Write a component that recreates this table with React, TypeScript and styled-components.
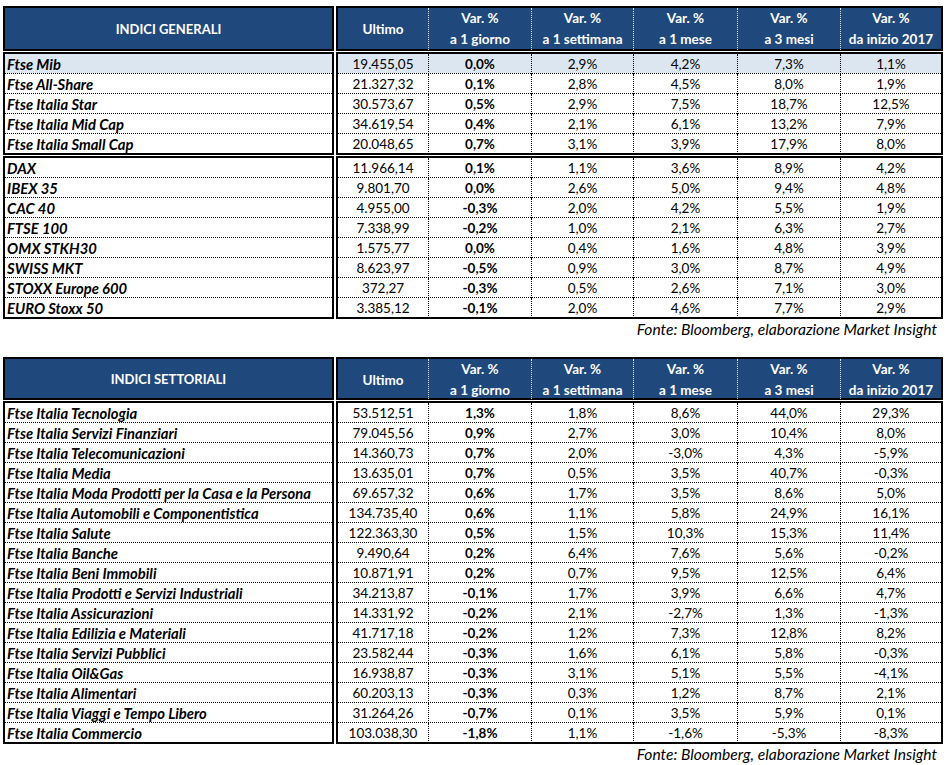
import React from 'react'
import styled, { createGlobalStyle } from 'styled-components'

const GlobalStyle = createGlobalStyle`
  * { box-sizing: border-box; }
  body {
    margin: 0;
    background: #fff;
    font-family: Lato, "Liberation Sans", sans-serif;
    color: #000;
  }
`;

// grid of the data columns
const COLS = '90px 103px 102px 104px 103px 1fr';
const BLUE = '#1F497D';

const Page = styled.div`
  padding: 6px 0 0 3px;
  width: 947px;
`;

const TableBlock = styled.div`
  display: flex;
  flex-direction: column;
  gap: 1px;
  width: 940px;
`;

const Section = styled.div`
  display: grid;
  grid-template-columns: 331px 607px;
  column-gap: 2px;
`;

const Box = styled.div`
  border: 2px solid #000;
`;

// header
const HeaderLabel = styled.div<{ $h: number }>`
  height: ${({ $h }) => $h}px;
  background: ${BLUE};
  color: #fff;
  font-weight: bold;
  font-size: 13px;
  display: flex;
  align-items: center;
  justify-content: center;
`;
const HeaderGrid = styled.div<{ $h: number }>`
  height: ${({ $h }) => $h}px;
  background: ${BLUE};
  display: grid;
  grid-template-columns: ${COLS};
`;
const HeaderCell = styled.div`
  color: #fff;
  font-weight: bold;
  font-size: 13.5px;
  line-height: 21px;
  display: flex;
  flex-direction: column;
  align-items: center;
  justify-content: center;
  & + & {
    border-left: 1px dotted rgba(255, 255, 255, 0.85);
  }
`;

// body rows
const LabelRow = styled.div<{ $shade?: boolean }>`
  height: 19px;
  line-height: 20px;
  padding-left: 2px;
  font-size: 14.8px;
  font-weight: bold;
  font-style: italic;
  white-space: nowrap;
  background: ${({ $shade }) => ($shade ? '#DCE6F1' : '#fff')};
  & + & {
    height: 20px;
    border-top: 1px dotted #000;
  }
`;
const DataRow = styled.div<{ $shade?: boolean }>`
  height: 19px;
  display: grid;
  grid-template-columns: ${COLS};
  background: ${({ $shade }) => ($shade ? '#DCE6F1' : '#fff')};
  & + & {
    height: 20px;
    border-top: 1px dotted #000;
  }
`;
const Cell = styled.div<{ $bold?: boolean }>`
  text-align: center;
  font-size: 13.5px;
  line-height: 20px;
  font-weight: ${({ $bold }) => ($bold ? 'bold' : 'normal')};
  & + & {
    border-left: 1px dotted #000;
  }
`;

const Note = styled.div<{ $gap: number }>`
  width: 940px;
  text-align: right;
  padding: 1px 6px 0 0;
  line-height: 18px;
  font-size: 15.6px;
  font-style: italic;
  margin-bottom: ${({ $gap }) => $gap}px;
`;

type Row = [string, string, string, string, string, string, string];

const generaliA: Row[] = [
  ['Ftse Mib', '19.455,05', '0,0%', '2,9%', '4,2%', '7,3%', '1,1%'],
  ['Ftse All-Share', '21.327,32', '0,1%', '2,8%', '4,5%', '8,0%', '1,9%'],
  ['Ftse Italia Star', '30.573,67', '0,5%', '2,9%', '7,5%', '18,7%', '12,5%'],
  ['Ftse Italia Mid Cap', '34.619,54', '0,4%', '2,1%', '6,1%', '13,2%', '7,9%'],
  ['Ftse Italia Small Cap', '20.048,65', '0,7%', '3,1%', '3,9%', '17,9%', '8,0%'],
];
const generaliB: Row[] = [
  ['DAX', '11.966,14', '0,1%', '1,1%', '3,6%', '8,9%', '4,2%'],
  ['IBEX 35', '9.801,70', '0,0%', '2,6%', '5,0%', '9,4%', '4,8%'],
  ['CAC 40', '4.955,00', '-0,3%', '2,0%', '4,2%', '5,5%', '1,9%'],
  ['FTSE 100', '7.338,99', '-0,2%', '1,0%', '2,1%', '6,3%', '2,7%'],
  ['OMX STKH30', '1.575,77', '0,0%', '0,4%', '1,6%', '4,8%', '3,9%'],
  ['SWISS MKT', '8.623,97', '-0,5%', '0,9%', '3,0%', '8,7%', '4,9%'],
  ['STOXX Europe 600', '372,27', '-0,3%', '0,5%', '2,6%', '7,1%', '3,0%'],
  ['EURO Stoxx 50', '3.385,12', '-0,1%', '2,0%', '4,6%', '7,7%', '2,9%'],
];
const settoriali: Row[] = [
  ['Ftse Italia Tecnologia', '53.512,51', '1,3%', '1,8%', '8,6%', '44,0%', '29,3%'],
  ['Ftse Italia Servizi Finanziari', '79.045,56', '0,9%', '2,7%', '3,0%', '10,4%', '8,0%'],
  ['Ftse Italia Telecomunicazioni', '14.360,73', '0,7%', '2,0%', '-3,0%', '4,3%', '-5,9%'],
  ['Ftse Italia Media', '13.635,01', '0,7%', '0,5%', '3,5%', '40,7%', '-0,3%'],
  ['Ftse Italia Moda Prodotti per la Casa e la Persona', '69.657,32', '0,6%', '1,7%', '3,5%', '8,6%', '5,0%'],
  ['Ftse Italia Automobili e Componentistica', '134.735,40', '0,6%', '1,1%', '5,8%', '24,9%', '16,1%'],
  ['Ftse Italia Salute', '122.363,30', '0,5%', '1,5%', '10,3%', '15,3%', '11,4%'],
  ['Ftse Italia Banche', '9.490,64', '0,2%', '6,4%', '7,6%', '5,6%', '-0,2%'],
  ['Ftse Italia Beni Immobili', '10.871,91', '0,2%', '0,7%', '9,5%', '12,5%', '6,4%'],
  ['Ftse Italia Prodotti e Servizi Industriali', '34.213,87', '-0,1%', '1,7%', '3,9%', '6,6%', '4,7%'],
  ['Ftse Italia Assicurazioni', '14.331,92', '-0,2%', '2,1%', '-2,7%', '1,3%', '-1,3%'],
  ['Ftse Italia Edilizia e Materiali', '41.717,18', '-0,2%', '1,2%', '7,3%', '12,8%', '8,2%'],
  ['Ftse Italia Servizi Pubblici', '23.582,44', '-0,3%', '1,6%', '6,1%', '5,8%', '-0,3%'],
  ['Ftse Italia Oil&Gas', '16.938,87', '-0,3%', '3,1%', '5,1%', '5,5%', '-4,1%'],
  ['Ftse Italia Alimentari', '60.203,13', '-0,3%', '0,3%', '1,2%', '8,7%', '2,1%'],
  ['Ftse Italia Viaggi e Tempo Libero', '31.264,26', '-0,7%', '0,1%', '3,5%', '5,9%', '0,1%'],
  ['Ftse Italia Commercio', '103.038,30', '-1,8%', '1,1%', '-1,6%', '-5,3%', '-8,3%'],
];

const periods = ['a 1 giorno', 'a 1 settimana', 'a 1 mese', 'a 3 mesi', 'da inizio 2017'];

const Header = ({ title, h }: { title: string; h: number }) => (
  <Section>
    <Box>
      <HeaderLabel $h={h}>{title}</HeaderLabel>
    </Box>
    <Box>
      <HeaderGrid $h={h}>
        <HeaderCell>Ultimo</HeaderCell>
        {periods.map(p => (
          <HeaderCell key={p}>
            <span>Var. %</span>
            <span>{p}</span>
          </HeaderCell>
        ))}
      </HeaderGrid>
    </Box>
  </Section>
);

const Group = ({ rows, shadeFirst }: { rows: Row[]; shadeFirst?: boolean }) => (
  <Section>
    <Box>
      {rows.map((r, i) => (
        <LabelRow key={r[0]} $shade={shadeFirst && i === 0}>{r[0]}</LabelRow>
      ))}
    </Box>
    <Box>
      {rows.map((r, i) => (
        <DataRow key={r[0]} $shade={shadeFirst && i === 0}>
          {r.slice(1).map((v, j) => (
            <Cell key={j} $bold={j === 1}>{v}</Cell>
          ))}
        </DataRow>
      ))}
    </Box>
  </Section>
);

const App = () => {
  return (
    <Page>
      <GlobalStyle />

      {/* indici generali */}
      <TableBlock>
        <Header title="INDICI GENERALI" h={41} />
        <Group rows={generaliA} shadeFirst />
        <Group rows={generaliB} />
      </TableBlock>
      <Note $gap={19}>Fonte: Bloomberg, elaborazione Market Insight</Note>

      {/* indici settoriali */}
      <TableBlock>
        <Header title="INDICI SETTORIALI" h={39} />
        <Group rows={settoriali} />
      </TableBlock>
      <Note $gap={0}>Fonte: Bloomberg, elaborazione Market Insight</Note>
    </Page>
  )
}

export default App
